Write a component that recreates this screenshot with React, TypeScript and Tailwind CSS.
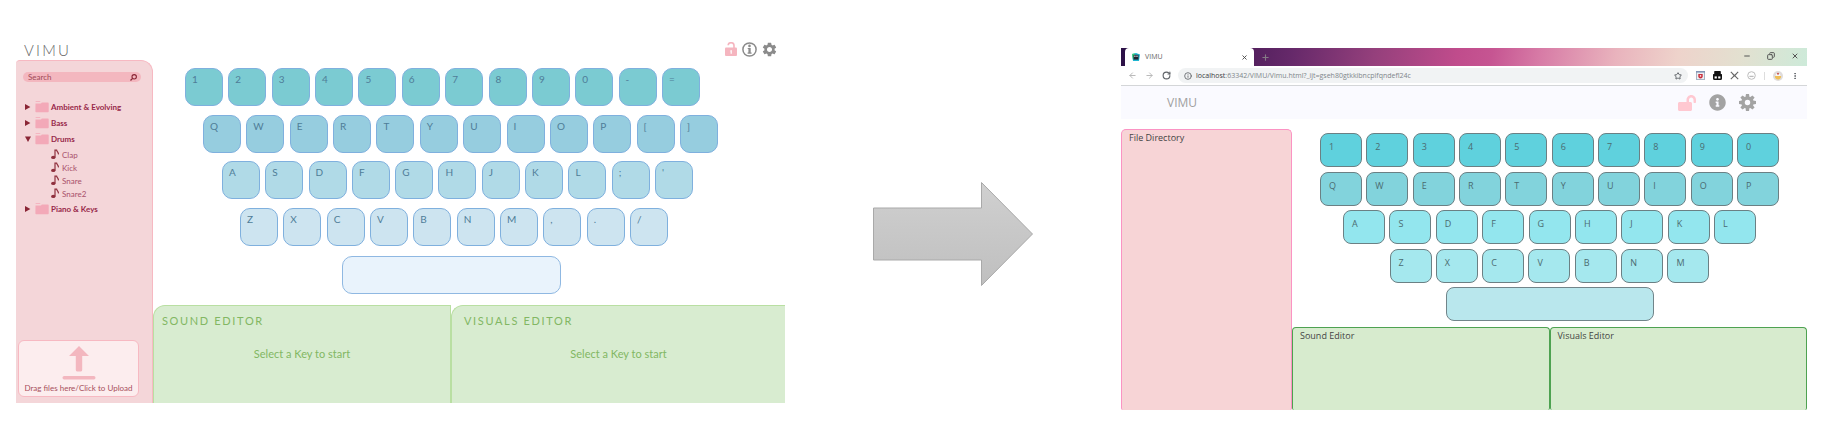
import React from "react";
import { MdSettings } from "react-icons/md";
import { FaLockOpen, FaInfoCircle } from "react-icons/fa";
import { ArrowLeft, ArrowRight, RotateCw, Info, Star, X, Plus, Minus, Copy, EllipsisVertical } from "lucide-react";

/* ---------- Design mock-up ---------- */

function FolderIcon() {
  return (
    <svg viewBox="0 0 14 12" className="h-3 w-[14px] shrink-0" fill="#f3a9b8" aria-hidden="true">
      <path d="M0.5 0.8Q0.5 0.3 1 0.3H4.6Q5.3 0.3 5.6 1.1H0.5Z" />
      <path d="M0.5 2.4H6L6.8 1.6H13Q13.7 1.6 13.7 2.4V10.6Q13.7 11.3 13 11.3H1.1Q0.4 11.3 0.4 10.6Z" />
    </svg>
  );
}

function NoteIcon() {
  return (
    <svg viewBox="0 0 8 11" className="h-[11px] w-2 shrink-0" aria-hidden="true">
      <ellipse cx="2.3" cy="8.4" rx="2.2" ry="1.7" fill="#8f2f3d" />
      <path d="M4 8.4V1.2H5.6C5.8 2.6 7.6 3.1 7.4 5.4" fill="none" stroke="#8f2f3d" strokeWidth="1.2" />
    </svg>
  );
}

function Triangle({ open }: { open: boolean }) {
  return (
    <svg viewBox="0 0 6 6" className="size-[6px] shrink-0" fill="#8a2636" aria-hidden="true">
      {open ? <path d="M0 0.5H6L3 6Z" /> : <path d="M0 0V6L5.4 3Z" />}
    </svg>
  );
}

const folders: { name: string; files?: string[] }[] = [
  { name: "Ambient & Evolving" },
  { name: "Bass" },
  { name: "Drums", files: ["Clap", "Kick", "Snare", "Snare2"] },
  { name: "Piano & Keys" },
];

const mockRows = [
  { keys: "1234567890-=".split(""), row: "ml-8 w-[515px]", key: "bg-[#7bcbd2]" },
  { keys: "QWERTYUIOP[]".split(""), row: "ml-[50px] w-[515px]", key: "bg-[#96cddf]" },
  { keys: "ASDFGHJKL;'".split(""), row: "ml-[69px] w-[471px]", key: "bg-[#b0dae7]" },
  { keys: "ZXCVBNM,./".split(""), row: "ml-[87px] w-[428px]", key: "bg-[#cde4f0]" },
];

function Sidebar() {
  return (
    <aside className="flex flex-col rounded-tl-[4px] rounded-tr-[12px] border-t border-r border-[#f7b9c2] bg-[#f4d6d9]">
      <label className="mt-[11px] mr-[11px] ml-[7px] flex h-[10px] items-center rounded-full bg-[#f3b7bf] pr-1 pl-[5px]">
        <input
          type="text"
          aria-label="Search"
          placeholder="Search"
          className="min-w-0 flex-1 bg-transparent text-[8px] leading-[10px] text-[#a04a58] outline-none placeholder:text-[#a04a58]"
        />
        <svg viewBox="0 0 7 7" className="size-[7px]" fill="none" stroke="#8a2636" aria-hidden="true">
          <circle cx="4.2" cy="2.8" r="2.2" strokeWidth="1.1" />
          <path d="M2.6 4.4L0.5 6.5" strokeWidth="1.3" />
        </svg>
      </label>
      <ul className="mt-[17px] pl-[9px]">
        {folders.map((f) => (
          <li key={f.name}>
            <button type="button" className="flex h-4 items-center text-[8px] font-bold text-[#98284a]">
              <Triangle open={!!f.files} />
              <span className="ml-1 flex">
                <FolderIcon />
              </span>
              <span className="ml-[2px] whitespace-nowrap">{f.name}</span>
            </button>
            {f.files && (
              <ul className="py-px pl-[26px]">
                {f.files.map((n) => (
                  <li key={n}>
                    <button type="button" className="flex h-[13px] items-center gap-[3px] text-[8px] text-[#a8506a]">
                      <NoteIcon />
                      {n}
                    </button>
                  </li>
                ))}
              </ul>
            )}
          </li>
        ))}
      </ul>
      <button
        type="button"
        className="mt-auto mr-[13px] mb-[6px] ml-[2px] flex h-[57px] flex-col items-center rounded-[6px] border border-[#f7b9c2] bg-[#fcedee] pt-[5px]"
      >
        <svg viewBox="0 0 34 34" className="h-[34px] w-[34px]" fill="#f3b7bf" aria-hidden="true">
          <path d="M17 0L27 10H20.2V24Q20.2 25.4 19 25.4H15Q13.8 25.4 13.8 24V10H7Z" />
          <rect x="0.5" y="30" width="33" height="3.4" rx="1.7" />
        </svg>
        <span className="mt-[3px] text-[8px] leading-[10px] whitespace-nowrap text-[#a8505c]">Drag files here/Click to Upload</span>
      </button>
    </aside>
  );
}

function MockEditor({ title, edge }: { title: string; edge: string }) {
  return (
    <section className={"h-[98px] rounded-tl-[12px] border-t border-l border-[#b9dfa2] bg-[#d8ecd0] text-[#82b763] " + edge}>
      <h2 className="pt-[7px] text-[11px] leading-4 tracking-[0.15em]">{title}</h2>
      <p className="mt-[17px] text-center text-[11px] leading-4">Select a Key to start</p>
    </section>
  );
}

function Mockup() {
  return (
    <div className="font-[Lato,sans-serif]">
      <header className="flex h-[22px] items-center justify-between pr-2 pl-2">
        <h1 className="pt-px text-[15px] leading-5 font-light tracking-[0.15em] text-[#666]">VIMU</h1>
        <div className="flex items-center gap-[5px] text-[#8b8b8b]">
          <button type="button" aria-label="Unlock">
            <svg viewBox="0 0 12 14" className="h-[14px] w-3" aria-hidden="true">
              <path d="M3.2 3.2C3.2 0 8.9-0.2 9 3.4V6" fill="none" stroke="#f5b5bf" strokeWidth="1.6" />
              <rect y="5.6" width="12" height="8.4" rx="1" fill="#f5b5bf" />
              <path d="M5 8.8L6.8 8V11.8H5.6V9.2H5Z" fill="#fff" />
            </svg>
          </button>
          <button type="button" aria-label="Information">
            <svg viewBox="0 0 15 15" className="size-[15px]" aria-hidden="true">
              <circle cx="7.5" cy="7.5" r="6.6" fill="none" stroke="currentColor" strokeWidth="1.5" />
              <circle cx="7.5" cy="3.9" r="1.3" fill="currentColor" />
              <path d="M5.7 6H8.7V10.6H9.6V11.8H5.6V10.6H6.4V7.1H5.7Z" fill="currentColor" />
            </svg>
          </button>
          <button type="button" aria-label="Settings" className="-m-px">
            <MdSettings className="size-[17px]" />
          </button>
        </div>
      </header>
      <div className="grid grid-cols-[minmax(0,137fr)_minmax(0,632fr)]">
        <Sidebar />
        <main>
          <div className="flex h-[186px] flex-col justify-between pt-2">
            {mockRows.map((r) => (
              <div key={r.keys[0]} className={"flex justify-between " + r.row}>
                {r.keys.map((k) => (
                  <button
                    key={k}
                    type="button"
                    className={"flex size-[38px] items-start rounded-[10px] border border-[#7fb0de] pt-1 pl-[6px] text-[10px] leading-3 text-[#4f7d98] " + r.key}
                  >
                    {k}
                  </button>
                ))}
              </div>
            ))}
          </div>
          <button
            type="button"
            aria-label="Space"
            className="mt-[10px] ml-[189px] block h-[38px] w-[219px] rounded-[10px] border border-[#8fb8e2] bg-[#e9f3fc]"
          />
          <div className="mt-[11px] grid grid-cols-[minmax(0,298fr)_minmax(0,334fr)]">
            <MockEditor title="SOUND EDITOR" edge="border-r [&>h2]:pl-2" />
            <MockEditor title="VISUALS EDITOR" edge="[&>h2]:pl-3" />
          </div>
        </main>
      </div>
    </div>
  );
}

/* ---------- Transition arrow ---------- */

function BigArrow() {
  return (
    <svg viewBox="0 0 162 106" className="mx-auto mt-[143px] h-[106px] w-[162px]" aria-hidden="true">
      <defs>
        <linearGradient id="arrow" x1="0" y1="0" x2="0" y2="1">
          <stop offset="0" stopColor="#d0d0d0" />
          <stop offset="1" stopColor="#bfbfbf" />
        </linearGradient>
      </defs>
      <path d="M1.5 27H109.5V1.5L160.5 53L109.5 104.5V79H1.5Z" fill="url(#arrow)" stroke="#a9a9a9" />
    </svg>
  );
}

/* ---------- Browser window ---------- */

const appRows = [
  { keys: "1234567890".split(""), row: "w-[459px]", key: "bg-[#5fd1dd]" },
  { keys: "QWERTYUIOP".split(""), row: "w-[459px]", key: "bg-[#82d3dc]" },
  { keys: "ASDFGHJKL".split(""), row: "w-[413px]", key: "bg-[#93e6ee]" },
  { keys: "ZXCVBNM".split(""), row: "w-[320px]", key: "bg-[#a5e8ee]" },
];

function GearIcon() {
  return (
    <svg viewBox="-10 -10 20 20" className="size-[17px]" aria-hidden="true">
      {[0, 45, 90, 135].map((a) => (
        <path key={a} d="M-1.8 -10H1.8L2.6 -5V5L1.8 10H-1.8L-2.6 5V-5Z" fill="currentColor" transform={`rotate(${a})`} />
      ))}
      <circle r="7.2" fill="currentColor" />
      <circle r="3.2" fill="#fafaff" />
    </svg>
  );
}

function TabStrip() {
  return (
    <div className="flex h-[18px] items-center bg-[linear-gradient(100deg,#2c1147_0%,#4a1c58_16%,#66296a_25%,#95407c_37%,#c04c8c_49%,#c65592_54%,#d77ba6_61%,#e9b3bd_72%,#eed3cb_81%,#e3e0d0_90%,#cdead9_100%)]">
      <div className="ml-1 flex h-full w-[129px] items-center rounded-t-[4px] bg-white pr-[6px] pl-[7px]">
        <svg viewBox="0 0 8 8" className="size-2" aria-hidden="true">
          <path d="M0 1L4 0L8 1.5L7 8H1Z" fill="#1fb5d0" />
          <path d="M0 1L3 0.4L1 7Z" fill="#3fd67a" />
          <rect x="1.5" y="1.8" width="5" height="4.8" fill="#1d2230" />
          <rect x="2.3" y="2.6" width="1.2" height="1.2" fill="#fff" />
          <rect x="4.4" y="2.6" width="1.2" height="1.2" fill="#fff" />
        </svg>
        <span className="ml-[5px] text-[7px] leading-[10px] text-[#666]">VIMU</span>
        <button type="button" aria-label="Close tab" className="ml-auto">
          <X className="size-[7px] text-[#444]" strokeWidth={3} />
        </button>
      </div>
      <button type="button" aria-label="New tab" className="ml-[7px]">
        <Plus className="size-[9px] text-[#857a86]" strokeWidth={3} />
      </button>
      <div className="mr-2 ml-auto flex items-center gap-4 pb-[3px] text-[#555]">
        <button type="button" aria-label="Minimise"><Minus className="size-2" strokeWidth={3} /></button>
        <button type="button" aria-label="Restore"><Copy className="size-2 -scale-x-100" strokeWidth={3} /></button>
        <button type="button" aria-label="Close window"><X className="size-2" strokeWidth={3} /></button>
      </div>
    </div>
  );
}

function AddressBar() {
  return (
    <div className="flex h-5 items-center border-b border-[#d4d6d8] bg-white pr-2 pl-[7px] text-[#5f6368]">
      <button type="button" aria-label="Back"><ArrowLeft className="size-[9px] text-[#b5b5b5]" strokeWidth={2.5} /></button>
      <button type="button" aria-label="Forward" className="ml-2"><ArrowRight className="size-[9px] text-[#b5b5b5]" strokeWidth={2.5} /></button>
      <button type="button" aria-label="Reload" className="ml-2"><RotateCw className="size-[9px]" strokeWidth={3} /></button>
      <div className="ml-[7px] flex h-[15px] min-w-0 flex-1 items-center rounded-full bg-[#f1f3f4] px-[6px]">
        <Info className="size-2 shrink-0" strokeWidth={2.5} />
        <p className="ml-1 truncate text-[7px] leading-[10px] text-[#80868b]">
          <span className="text-[#3c4043]">localhost</span>:63342/VIMU/Vimu.html?_ijt=gseh80gtkkibncpifqndefl24c
        </p>
        <button type="button" aria-label="Bookmark" className="ml-auto"><Star className="size-2" strokeWidth={3} /></button>
      </div>
      <div className="ml-2 flex items-center gap-2" aria-hidden="true">
        <svg viewBox="0 0 9 9" className="size-[9px]">
          <rect x="0.5" y="0.5" width="8" height="8" fill="#eef0f3" stroke="#a9b4c4" />
          <rect width="9" height="1.6" fill="#8295b5" />
          <path d="M2.3 3H6.7V5.4Q6.5 7.4 4.5 7.6Q2.5 7.4 2.3 5.4Z" fill="#c9303e" />
          <rect x="3.8" y="4.2" width="1.4" height="1.4" fill="#fff" />
        </svg>
        <svg viewBox="0 0 9 9" className="size-[9px]">
          <path d="M1.8 0H7.2Q7.8 0 7.8 0.6V3H8.4Q9 3 9 3.6V7.5Q9 9 7.5 9H1.5Q0 9 0 7.5V3.6Q0 3 0.6 3H1.2V0.6Q1.2 0 1.8 0Z" fill="#111" />
          <rect x="1.6" y="5.4" width="2.2" height="2.1" fill="#fff" />
          <rect x="5.2" y="5.4" width="2.2" height="2.1" fill="#fff" />
        </svg>
        <svg viewBox="0 0 9 9" className="size-[9px]" fill="none" stroke="#666">
          <path d="M0.8 0.8L8.2 8.2M8.2 0.8L0.8 8.2" strokeWidth="1.1" />
          <path d="M2.6 3.6L4.5 4.6L6.4 3.6" strokeWidth="0.7" />
        </svg>
        <svg viewBox="0 0 9 9" className="size-[9px]" fill="none" stroke="#bcbcbc">
          <circle cx="4.5" cy="4.5" r="3.8" />
          <path d="M2.4 5.4H6.6" strokeWidth="1.3" />
        </svg>
        <span className="h-2 w-px bg-[#ddd]" />
        <svg viewBox="0 0 10 10" className="size-[10px]">
          <circle cx="5" cy="5" r="5" fill="#dfdcdc" />
          <path d="M1.8 5H8.2Q8 8.4 5 8.6Q2 8.4 1.8 5Z" fill="#f0bf55" />
          <path d="M2.4 4.8Q3 2.4 5 2.4T7.6 4.8Z" fill="#fff" />
          <circle cx="5" cy="2.8" r="1" fill="#c8504c" />
        </svg>
      </div>
      <button type="button" aria-label="Menu" className="ml-2"><EllipsisVertical className="size-2" strokeWidth={3} /></button>
    </div>
  );
}

function AppEditor({ title }: { title: string }) {
  return (
    <section className="h-[83px] rounded-t-[4px] rounded-b-[2px] border border-b-0 border-[#4ea251] bg-[#d7ebce] px-[7px] pt-px">
      <h2 className="text-[9px] leading-[14px] text-[#444]">{title}</h2>
    </section>
  );
}

function BrowserWindow() {
  return (
    <div className="mt-[10px] font-['Open_Sans','Noto_Sans',sans-serif]">
      <TabStrip />
      <AddressBar />
      <header className="flex h-[33px] items-center justify-between bg-[#fafaff] pr-[51px] pl-[46px]">
        <h1 className="text-[12px] leading-4 text-[#a0a0a0]">VIMU</h1>
        <div className="flex items-center gap-[13px] text-[#a3a3a3]">
          <button type="button" aria-label="Unlock"><FaLockOpen className="h-4 w-[18px] text-[#ffc8d1]" /></button>
          <button type="button" aria-label="Information"><FaInfoCircle className="size-[17px]" /></button>
          <button type="button" aria-label="Settings"><GearIcon /></button>
        </div>
      </header>
      <div className="mt-[10px] grid grid-cols-[minmax(0,171fr)_minmax(0,515fr)]">
        <aside className="rounded-t-[5px] rounded-b-[2px] border border-b-0 border-[#fb93c3] bg-[#f7d4d6] px-[7px]">
          <h2 className="text-[9px] leading-4 text-[#444]">File Directory</h2>
        </aside>
        <main>
          <div className="flex h-[192px] flex-col items-center justify-between pt-1">
            {appRows.map((r) => (
              <div key={r.keys[0]} className={"flex justify-between " + r.row}>
                {r.keys.map((k) => (
                  <button
                    key={k}
                    type="button"
                    className={"flex h-[34px] w-[42px] items-start rounded-[8px] border border-[#6b8084] pt-[6px] pl-2 text-[9px] leading-[14px] text-[#4b6b70] " + r.key}
                  >
                    {k}
                  </button>
                ))}
              </div>
            ))}
            <button type="button" aria-label="Space" className="h-[34px] w-[208px] rounded-[8px] border border-[#71858a] bg-[#b9e7ed]" />
          </div>
          <div className="mt-[6px] grid grid-cols-2">
            <AppEditor title="Sound Editor" />
            <AppEditor title="Visuals Editor" />
          </div>
        </main>
      </div>
    </div>
  );
}

export default function App() {
  return (
    <div className="grid grid-cols-[minmax(0,769fr)_minmax(0,336fr)_minmax(0,686fr)] items-start bg-white pt-[38px] pr-6 pb-5 pl-4">
      <Mockup />
      <BigArrow />
      <BrowserWindow />
    </div>
  );
}
